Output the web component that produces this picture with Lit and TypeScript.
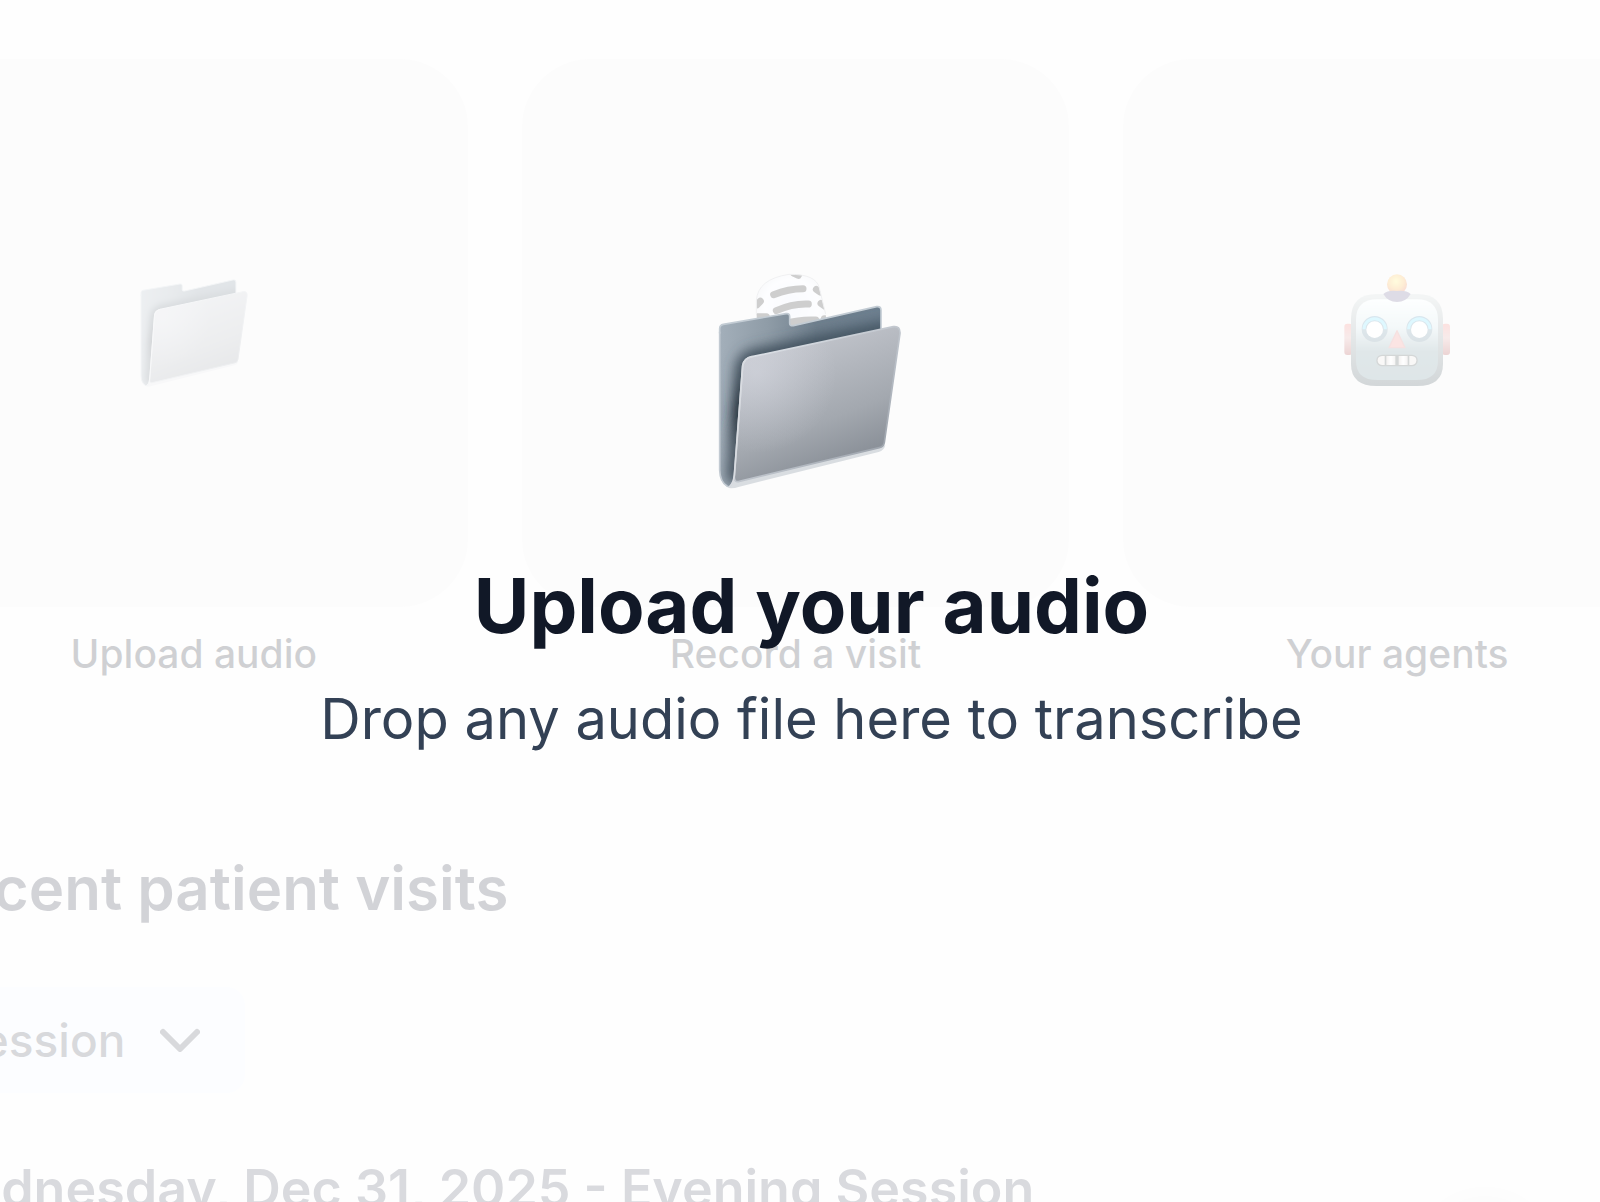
import { LitElement, html, css, svg } from "lit";
import { customElement, property } from "lit/decorators.js";

@customElement("folder-icon")
class FolderIcon extends LitElement {
  @property() box = "83 135 612 612";

  static styles = css`
    :host { display: block; }
    svg { display: block; width: 100%; height: 100%; }
  `;

  render() {
    return html`
      <svg viewBox=${this.box} aria-hidden="true">
        <defs>
          <linearGradient id="back" gradientUnits="userSpaceOnUse" x1="118" y1="0" x2="603" y2="0">
            <stop offset="0" stop-color="#a3afba" />
            <stop offset="0.3" stop-color="#8f9ca7" />
            <stop offset="0.6" stop-color="#6f7f8d" />
            <stop offset="1" stop-color="#6d7f8f" />
          </linearGradient>
          <clipPath id="back-shape">
            <path d="M118 236Q118 225 130 223L318 191Q329 189 329 200V220Q329 229 340 227L590 170Q603 168 603 181V300L190 520L160 700Q152 715 140 709Q119 694 119 660Z" />
          </clipPath>
          <filter id="soft" x="-30%" y="-30%" width="160%" height="160%">
            <feGaussianBlur stdDeviation="19" />
          </filter>
          <linearGradient id="shade" gradientUnits="userSpaceOnUse" x1="0" y1="220" x2="0" y2="600">
            <stop offset="0" stop-color="#465765" />
            <stop offset="0.4" stop-color="#384753" />
            <stop offset="0.7" stop-color="#16202b" />
            <stop offset="1" stop-color="#44515d" />
          </linearGradient>
          <linearGradient id="front" gradientUnits="userSpaceOnUse" x1="290" y1="300" x2="430" y2="660">
            <stop offset="0" stop-color="#c1c4cb" />
            <stop offset="0.3" stop-color="#b3b7be" />
            <stop offset="0.65" stop-color="#a3a8af" />
            <stop offset="1" stop-color="#8a9098" />
          </linearGradient>
          <radialGradient id="glow" gradientUnits="userSpaceOnUse" cx="230" cy="370" r="240">
            <stop offset="0" stop-color="#dddfe8" stop-opacity="0.45" />
            <stop offset="1" stop-color="#dddfe8" stop-opacity="0" />
          </radialGradient>
          <linearGradient id="edge" x1="0" y1="0" x2="1" y2="1">
            <stop offset="0" stop-color="#e7ebf0" />
            <stop offset="0.6" stop-color="#b9bfc7" />
            <stop offset="1" stop-color="#8d949d" />
          </linearGradient>
        </defs>
        <g clip-path="url(#back-shape)">
          <rect x="110" y="160" width="500" height="560" fill="url(#back)" />
          <path fill="none" stroke="url(#shade)" stroke-width="50" filter="url(#soft)"
            d="M640 234L225 322Q196 330 192 355L164 700" />
        </g>
        <path fill="none" stroke="#c3ccd4" stroke-width="5" stroke-linecap="round"
          d="M119 250V236Q119 225 130 223L318 191Q329 189 329 200V220Q329 229 340 227L590 170Q603 168 603 181V235" />
        <path fill="none" stroke="#c2cad2" stroke-width="5" d="M119 245V660Q120 696 142 709Q152 714 158 698" />
        <path fill="#d9dde1" d="M166 640L160 690Q158 708 146 714Q160 716 178 710L596 606Q612 601 616 586L590 590Z" />
        <path fill="url(#front)" stroke="url(#edge)" stroke-width="5" stroke-linejoin="round"
          d="M188 347Q192 325 216 320L640 230Q661 227 660 250L613 577Q611 590 598 593L178 694Q162 698 163 680Z" />
        <path fill="url(#glow)"
          d="M190 347Q194 327 216 322L640 232Q659 229 658 250L611 577Q609 588 598 591L178 692Q164 696 165 680Z" />
        <path fill="none" stroke="#d9dce1" stroke-width="5" stroke-linecap="round"
          d="M216 320Q192 325 188 347L163 676Q160 700 148 711" />
      </svg>
    `;
  }
}

const mic = svg`
  <defs>
    <clipPath id="mic-head"><path d="M232 150Q236 85 330 71Q412 70 421 112L440 190Q446 226 420 262L300 280Q232 240 232 190Z" /></clipPath>
    <radialGradient id="steel" cx="0.5" cy="0.45" r="0.6">
      <stop offset="0" stop-color="#dfe5f6" />
      <stop offset="0.6" stop-color="#f4f7ff" />
      <stop offset="1" stop-color="#cdd0d6" />
    </radialGradient>
  </defs>
  <path fill="#3c3c42" d="M300 270h100l-16 84h-60zM300 384q48-26 100 0v22H300z" />
  <g clip-path="url(#mic-head)">
    <rect x="225" y="66" width="225" height="220" fill="url(#steel)" />
    <g stroke="#0c0c0c" stroke-width="21" stroke-linecap="round" fill="none">
      <path d="M284 132Q328 114 372 114" />
      <path d="M292 180Q340 158 388 160" />
      <path d="M322 218Q360 206 410 208" />
      <path d="M234 162L244 152M345 68L358 74M412 116L424 124M426 158L440 168M232 198L262 198M436 204h12" />
    </g>
  </g>
  <path fill="none" stroke="#b4b6bc" stroke-width="3" d="M232 190V150Q236 85 330 71Q412 70 421 112L440 190" />
`;

const robot = svg`
  <defs>
    <linearGradient id="face" x1="0" y1="0" x2="0" y2="1">
      <stop offset="0" stop-color="#f6feff" />
      <stop offset="0.35" stop-color="#c6dce2" />
      <stop offset="0.65" stop-color="#648892" />
      <stop offset="1" stop-color="#5c818a" />
    </linearGradient>
    <linearGradient id="shell" x1="0" y1="0" x2="0" y2="1">
      <stop offset="0" stop-color="#c6d0d0" />
      <stop offset="1" stop-color="#21363f" />
    </linearGradient>
    <linearGradient id="ear" x1="0" y1="0" x2="0" y2="1">
      <stop offset="0" stop-color="#f06c64" />
      <stop offset="0.45" stop-color="#d89a98" />
      <stop offset="1" stop-color="#a02a29" />
    </linearGradient>
    <linearGradient id="ring" x1="0" y1="0" x2="0" y2="1">
      <stop offset="0" stop-color="#3f84ad" />
      <stop offset="0.5" stop-color="#57839a" />
      <stop offset="1" stop-color="#4c7284" />
    </linearGradient>
    <radialGradient id="bulb" cx="0.45" cy="0.35" r="0.65">
      <stop offset="0" stop-color="#fff05a" />
      <stop offset="0.6" stop-color="#f7a52c" />
      <stop offset="1" stop-color="#e0542a" />
    </radialGradient>
    <linearGradient id="tooth" x1="0" y1="0" x2="1" y2="0">
      <stop offset="0" stop-color="#bfb9b5" />
      <stop offset="0.5" stop-color="#ffffff" />
      <stop offset="1" stop-color="#c8c4c0" />
    </linearGradient>
  </defs>
  <rect x="73" y="219" width="24" height="94" rx="9" fill="url(#ear)" />
  <rect x="366" y="219" width="24" height="94" rx="9" fill="url(#ear)" />
  <path fill="url(#shell)" d="M93 205Q93 130 170 130H292Q369 130 369 205V340Q369 406 292 406H170Q93 406 93 340Z" />
  <path fill="url(#face)" d="M108 208Q108 146 172 146H290Q354 146 354 208V330Q354 388 290 388H172Q108 388 108 330Z" />
  <circle cx="231" cy="101" r="30" fill="url(#bulb)" />
  <path fill="#5c5380" d="M190 130Q205 117 231 121Q257 117 272 130Q258 154 231 154Q204 154 190 130Z" />
  <g>
    <circle cx="164" cy="235" r="39" fill="url(#ring)" />
    <path d="M132 236A32 32 0 0 1 196 236" fill="none" stroke="#5cdcff" stroke-width="9" />
    <circle cx="164" cy="237" r="25" fill="#fff" />
    <circle cx="298" cy="235" r="39" fill="url(#ring)" />
    <path d="M266 236A32 32 0 0 1 330 236" fill="none" stroke="#5cdcff" stroke-width="9" />
    <circle cx="298" cy="237" r="25" fill="#fff" />
  </g>
  <path d="M231 240L255 291H207Z" fill="#e87a76" stroke="#cf6a68" stroke-width="4" stroke-linejoin="round" />
  <rect x="169" y="312" width="124" height="35" rx="17" fill="#2c3a3b" />
  <path d="M194 316V343H186Q173 342 173 329Q173 317 186 316Z" fill="#dedad7" />
  <rect x="199" y="316" width="27" height="27" fill="url(#tooth)" />
  <rect x="236" y="316" width="27" height="27" fill="url(#tooth)" />
  <path d="M268 316V343H276Q289 342 289 329Q289 317 276 316Z" fill="#dedad7" />
`;

@customElement("app-root")
class AppRoot extends LitElement {
  static styles = css`
    :host {
      display: block;
      position: relative;
      height: 100vh;
      overflow: hidden;
      background: #fafafa;
      color: #111827;
      font-family: Inter, "Liberation Sans", sans-serif;
    }
    * { box-sizing: border-box; }
    h1, h2, h3, p { margin: 0; }
    .page {
      display: flex;
      flex-direction: column;
      margin: 0 -71px 0 -80px;
      padding-top: 59px;
    }
    .actions {
      display: grid;
      grid-template-columns: repeat(3, 1fr);
      gap: 54px;
    }
    .action {
      display: flex;
      flex-direction: column;
      gap: 19px;
      padding: 0;
      border: 0;
      background: none;
      color: inherit;
      font: 500 39px/56px Inter, "Liberation Sans", sans-serif;
      text-align: center;
    }
    .tile {
      display: grid;
      place-items: center;
      width: 100%;
      aspect-ratio: 1;
      border-radius: 68px;
      background: #f0f0f0;
    }
    .label { width: 100%; }
    .glyph { display: block; width: 120px; height: 120px; }
    .recent { padding-top: 166px; }
    .heading {
      color: #1e2337;
      font-size: 60px;
      line-height: 80px;
      font-weight: 600;
    }
    .picker {
      display: grid;
      align-items: center;
      width: 325px;
      margin: 59px 0 64px;
    }
    .picker > * { grid-area: 1 / 1; }
    .select {
      appearance: none;
      width: 100%;
      height: 106px;
      padding: 0 32px;
      border: 0;
      border-radius: 18px;
      background: #f0f5fd;
      color: #3c4150;
      font: 500 46px/60px Inter, "Liberation Sans", sans-serif;
    }
    .chevron {
      justify-self: end;
      width: 40px;
      height: 24px;
      margin-right: 45px;
      pointer-events: none;
    }
    .session {
      color: #41465a;
      font-size: 52px;
      line-height: 64px;
      font-weight: 600;
      white-space: nowrap;
    }
    .overlay {
      position: absolute;
      inset: 0;
      display: flex;
      flex-direction: column;
      align-items: center;
      padding: 298px 0 0 23px;
      background: rgba(255, 255, 255, 0.8);
      text-align: center;
    }
    .hero { width: 204px; height: 204px; }
    .title {
      padding-top: 55px;
      color: #111827;
      font-size: 76px;
      line-height: 96px;
      font-weight: 700;
    }
    .hint {
      padding-top: 30px;
      color: #334155;
      font-size: 56px;
      line-height: 72px;
    }
    .help {
      position: absolute;
      right: 75px;
      bottom: -96px;
      width: 80px;
      height: 80px;
      border: 0;
      border-radius: 50%;
      background: #fff;
      box-shadow: 0 0 40px 4px rgba(0, 0, 0, 0.25);
    }
  `;

  render() {
    return html`
      <main class="page">
        <nav class="actions" aria-label="Quick actions">
          <button class="action">
            <span class="tile"><folder-icon class="glyph"></folder-icon></span>
            <span class="label">Upload audio</span>
          </button>
          <button class="action">
            <span class="tile"><svg class="glyph" viewBox="168 67 360 360" aria-hidden="true">${mic}</svg></span>
            <span class="label">Record a visit</span>
          </button>
          <button class="action">
            <span class="tile"><svg class="glyph" viewBox="51 67 360 360" aria-hidden="true">${robot}</svg></span>
            <span class="label">Your agents</span>
          </button>
        </nav>
        <section class="recent">
          <h2 class="heading">Recent patient visits</h2>
          <div class="picker">
            <select class="select" aria-label="Group visits by">
              <option>Session</option>
            </select>
            <svg class="chevron" viewBox="0 0 40 24" aria-hidden="true">
              <path d="M3 4L20 21L37 4" fill="none" stroke="#3c4150" stroke-width="6" stroke-linecap="round" stroke-linejoin="round" />
            </svg>
          </div>
          <h3 class="session">Wednesday, Dec 31, 2025 - Evening Session</h3>
        </section>
      </main>
      <button class="help" aria-label="Help"></button>
      <div class="overlay" role="dialog" aria-labelledby="drop-title">
        <folder-icon class="hero" box="90 144 612 612"></folder-icon>
        <h1 class="title" id="drop-title">Upload your audio</h1>
        <p class="hint">Drop any audio file here to transcribe</p>
      </div>
    `;
  }
}
